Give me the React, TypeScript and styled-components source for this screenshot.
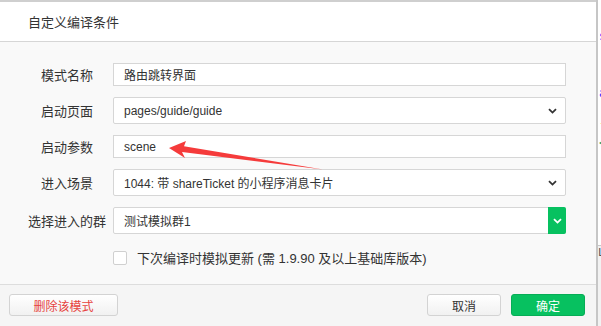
import React from "react";
import styled, { createGlobalStyle } from "styled-components";

const GlobalStyle = createGlobalStyle`
  html, body {
    margin: 0;
    padding: 0;
    background: #ffffff;
  }
  body {
    font-family: "Liberation Sans", "Noto Sans CJK SC", sans-serif;
    color: #333333;
  }
`;

interface Field {
  label: string;
  value: string;
  kind: "input" | "select" | "group";
}

const fields: Field[] = [
  { label: "模式名称", value: "路由跳转界面", kind: "input" },
  { label: "启动页面", value: "pages/guide/guide", kind: "select" },
  { label: "启动参数", value: "scene", kind: "input" },
  { label: "进入场景", value: "1044: 带 shareTicket 的小程序消息卡片", kind: "select" },
  { label: "选择进入的群", value: "测试模拟群1", kind: "group" },
];

// bits of the code editor peeking out behind the dialog
const codeGlyphs = [
  { gap: 30, ch: "s", color: "#1a1aff" },
  { gap: 45, ch: "a", color: "#1a1aff" },
  { gap: 18, ch: "-", color: "#b8a400" },
  { gap: 8, ch: "<", color: "#1f9d6a" },
  { gap: 6, ch: "(", color: "#1a1aff" },
  { gap: 10, ch: ".", color: "#1a1aff" },
  { gap: 22, ch: ".", color: "#a020f0" },
];

const Chevron: React.FC<{ color: string }> = ({ color }) => (
  <svg width="9" height="6" viewBox="0 0 9 6">
    <path d="M1 1.2 L4.5 4.6 L8 1.2" fill="none" stroke={color} strokeWidth="1.8" />
  </svg>
);

const App: React.FC = () => {
  return (
    <Page>
      <GlobalStyle />
      <Dialog>
        <Header>自定义编译条件</Header>

        <Body>
          {fields.map((f) => (
            <Row key={f.label}>
              <Label>{f.label}</Label>
              {f.kind === "input" ? (
                <TextBox>{f.value}</TextBox>
              ) : (
                <SelectBox>
                  <SelectValue>{f.value}</SelectValue>
                  <SelectArrow green={f.kind === "group"}>
                    <Chevron color={f.kind === "group" ? "#ffffff" : "#333333"} />
                  </SelectArrow>
                </SelectBox>
              )}
            </Row>
          ))}

          <CheckRow>
            <CheckBox />
            <CheckText>下次编译时模拟更新 (需 1.9.90 及以上基础库版本)</CheckText>
          </CheckRow>
        </Body>

        <Footer>
          <Button danger>删除该模式</Button>
          <FooterRight>
            <Button>取消</Button>
            <Button primary>确定</Button>
          </FooterRight>
        </Footer>
      </Dialog>

      <CodeStrip>
        <CodeLines>
          {codeGlyphs.map((g, i) => (
            <CodeGlyph key={i} style={{ marginTop: g.gap, color: g.color }}>
              {g.ch}
            </CodeGlyph>
          ))}
        </CodeLines>
        <CodeStatus>L</CodeStatus>
      </CodeStrip>

      <Arrow width="601" height="326" viewBox="0 0 601 326">
        <polygon
          points="169,148 186,141 184,146.2 323,169.4 182,152 185,158"
          fill="#f53b3b"
        />
      </Arrow>
    </Page>
  );
};

const Page = styled.div`
  position: relative;
  display: flex;
  width: 601px;
  height: 326px;
  overflow: hidden;
`;

const Dialog = styled.div`
  display: flex;
  flex-direction: column;
  width: 596px;
  height: 326px;
  border-right: 2px solid #c6c6c6;
  flex-shrink: 0;
`;

const Header = styled.div`
  display: flex;
  align-items: center;
  height: 39px;
  padding-left: 28px;
  background: #ffffff;
  border-top: 2px solid #cfcfcf;
  border-bottom: 1px solid #d6d6d6;
  font-size: 13px;
  color: #333333;
`;

const Body = styled.div`
  display: flex;
  flex-direction: column;
  gap: 11px;
  height: 243px;
  box-sizing: border-box;
  padding: 21px 0 0 21px;
  background: #f9f9f9;
  border-bottom: 1px solid #dddddd;
`;

const Row = styled.div`
  display: flex;
  align-items: center;
`;

const Label = styled.div`
  width: 92px;
  text-align: center;
  white-space: nowrap;
  font-size: 13px;
  color: #333333;
`;

const TextBox = styled.div`
  display: flex;
  align-items: center;
  box-sizing: border-box;
  width: 453px;
  height: 23px;
  padding-left: 10px;
  background: #ffffff;
  border: 1px solid #d6d6d6;
  font-size: 12px;
  color: #333333;
`;

const SelectBox = styled.div`
  display: flex;
  align-items: stretch;
  box-sizing: border-box;
  width: 453px;
  height: 27px;
  background: #ffffff;
  border: 1px solid #d6d6d6;
  border-radius: 2px;
`;

const SelectValue = styled.div`
  flex: 1;
  display: flex;
  align-items: center;
  padding-left: 10px;
  font-size: 12px;
  color: #333333;
  white-space: nowrap;
`;

const SelectArrow = styled.div<{ green?: boolean }>`
  display: flex;
  align-items: center;
  justify-content: center;
  width: 18px;
  margin: ${({ green }) => (green ? "-1px -1px -1px 0" : "0 4px 0 0")};
  background: ${({ green }) => (green ? "#07c160" : "transparent")};
  border-radius: 0 2px 2px 0;
`;

const CheckRow = styled.div`
  display: flex;
  align-items: center;
  gap: 10px;
  margin-top: 3px;
  padding-left: 92px;
`;

const CheckBox = styled.div`
  box-sizing: border-box;
  width: 14px;
  height: 14px;
  background: #ffffff;
  border: 1px solid #d0d0d0;
  border-radius: 2px;
`;

const CheckText = styled.span`
  font-size: 13px;
  color: #333333;
`;

const Footer = styled.div`
  display: flex;
  justify-content: space-between;
  align-items: flex-start;
  flex: 1;
  padding: 9px 11px 0 9px;
  background: #f5f5f5;
`;

const FooterRight = styled.div`
  display: flex;
  gap: 10px;
`;

const Button = styled.div<{ primary?: boolean; danger?: boolean }>`
  display: flex;
  align-items: center;
  justify-content: center;
  box-sizing: border-box;
  width: ${({ danger }) => (danger ? "109px" : "74px")};
  height: 22px;
  border-radius: 3px;
  font-size: 12px;
  border: 1px solid ${({ primary }) => (primary ? "#06ad56" : "#d3d3d3")};
  background: ${({ primary }) =>
    primary ? "#07c160" : "linear-gradient(#ffffff, #f1f1f1)"};
  color: ${({ primary, danger }) =>
    primary ? "#ffffff" : danger ? "#e64340" : "#333333"};
`;

const CodeStrip = styled.div`
  display: flex;
  flex-direction: column;
  flex: 1;
  background: #ffffff;
  overflow: hidden;
`;

const CodeLines = styled.div`
  display: flex;
  flex-direction: column;
  height: 245px;
  padding-left: 1px;
  border-bottom: 1px solid #c8c8c8;
`;

const CodeGlyph = styled.span`
  font-family: "DejaVu Sans Mono", monospace;
  font-size: 12px;
  line-height: 12px;
`;

const CodeStatus = styled.div`
  flex: 1;
  background: #f2f2f2;
  padding-left: 0;
  font-family: "DejaVu Sans Mono", monospace;
  font-size: 11px;
  color: #555555;
  line-height: 14px;
`;

const Arrow = styled.svg`
  position: absolute;
  left: 0;
  top: 0;
  pointer-events: none;
`;

export default App;
